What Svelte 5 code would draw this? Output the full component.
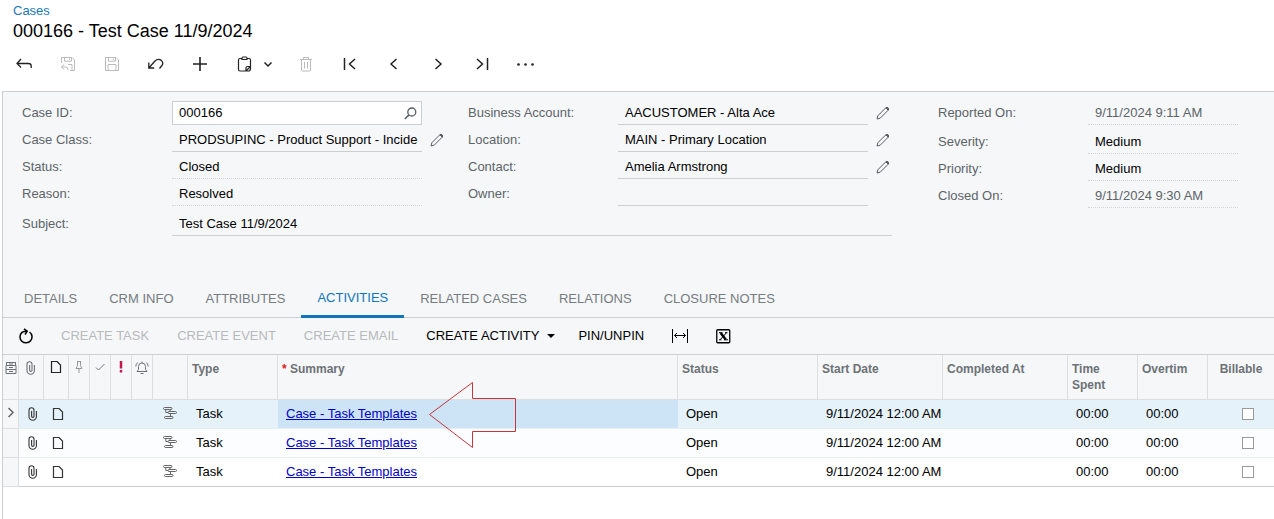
<script lang="ts">
  interface Field {
    id:string,
    label:string,
    value:string,
    edit?:boolean,
    locked?:boolean,
    muted?:boolean,
    search?:boolean};

  let caseFields = $state<Field[]>([
    { id: 'caseId', label: 'Case ID:', value: '000166', search: true },
    { id: 'caseClass', label: 'Case Class:', value: 'PRODSUPINC - Product Support - Incident', edit: true },
    { id: 'status', label: 'Status:', value: 'Closed', locked: true },
    { id: 'reason', label: 'Reason:', value: 'Resolved', locked: true },
  ]);
  let accountFields = $state<Field[]>([
    { id: 'account', label: 'Business Account:', value: 'AACUSTOMER - Alta Ace', edit: true },
    { id: 'location', label: 'Location:', value: 'MAIN - Primary Location', edit: true },
    { id: 'contact', label: 'Contact:', value: 'Amelia Armstrong', edit: true },
    { id: 'owner', label: 'Owner:', value: '' },
  ]);
  let dateFields = $state<Field[]>([
    { id: 'reportedOn', label: 'Reported On:', value: '9/11/2024 9:11 AM', locked: true, muted: true },
    { id: 'severity', label: 'Severity:', value: 'Medium', locked: true },
    { id: 'priority', label: 'Priority:', value: 'Medium', locked: true },
    { id: 'closedOn', label: 'Closed On:', value: '9/11/2024 9:30 AM', locked: true, muted: true },
  ]);
  let subject = $state('Test Case 11/9/2024');

  const tabs = ['DETAILS', 'CRM INFO', 'ATTRIBUTES', 'ACTIVITIES', 'RELATED CASES', 'RELATIONS', 'CLOSURE NOTES'];
  let activeTab = $state('ACTIVITIES');

  let rows = $state([
    { type: 'Task', summary: 'Case - Task Templates', status: 'Open', start: '9/11/2024 12:00 AM', spent: '00:00', overtime: '00:00', billable: false },
    { type: 'Task', summary: 'Case - Task Templates', status: 'Open', start: '9/11/2024 12:00 AM', spent: '00:00', overtime: '00:00', billable: false },
    { type: 'Task', summary: 'Case - Task Templates', status: 'Open', start: '9/11/2024 12:00 AM', spent: '00:00', overtime: '00:00', billable: false },
  ]);
  let selected = $state(0);
</script>

{#snippet pencil()}
  <svg width="14" height="14" viewBox="0 0 14 14">
    <path d="M1 13l.8-3.200 8-8q1.200-1 2.200 0t.2 2.400l-8 8z" />
    <path d="M9.800 1.800q1.200-1 2.200 0t.2 2.400z" fill="currentColor" />
  </svg>
{/snippet}

{#snippet clip()}
  <svg width="10" height="14" viewBox="0 0 10 14">
    <path d="M1 5v4.500a3.700 3.700 0 0 0 7.400 0V4M1 5V3.200a2.500 2.500 0 0 1 5 0v6a1.200 1.200 0 0 1-2.400 0V4" stroke-width="1.100" />
  </svg>
{/snippet}

{#snippet note()}
  <svg width="12" height="12" viewBox="0 0 12 12">
    <path d="M1.500.5h5.500l3.500 3.500v7.500h-9z" stroke-width="1.200" />
  </svg>
{/snippet}

{#snippet taskIcon()}
  <svg width="14" height="14" viewBox="0 0 14 14">
    <rect x=".5" y="1.500" width="8.500" height="2" rx="1" />
    <rect x="5" y="5.500" width="8.500" height="2" rx="1" />
    <rect x="1.500" y="10.500" width="8.500" height="2" rx="1" />
    <path d="M7 3.500v2M2.800 3.500v3H5M7.500 7.500v3" />
  </svg>
{/snippet}

{#snippet fieldRow(f:Field)}
  <div class="field">
    <label for={f.id}>{f.label}</label>
    <div class="box" class:locked={f.locked} class:search={f.search}>
      <input id={f.id} type="text" bind:value={f.value} readonly={f.locked} class:muted={f.muted} />
      {#if f.search}
        <button type="button" class="plain" aria-label="Search">
          <svg width="13" height="13" viewBox="0 0 13 13"><circle cx="7.800" cy="5" r="4" stroke-width="1.300" /><path d="M4.900 7.900L.8 12" stroke-width="1.500" /></svg>
        </button>
      {/if}
    </div>
    {#if f.edit}
      <button type="button" class="plain edit" aria-label="Edit">{@render pencil()}</button>
    {/if}
  </div>
{/snippet}

<div class="page">
  <header>
    <a class="crumb" href="#cases">Cases</a>
    <h1>000166 - Test Case 11/9/2024</h1>
    <div class="actions">
      <button aria-label="Back">
        <svg width="16" height="16" viewBox="0 0 16 16"><path d="M5 3L1 7.500l4 4M1 7.500h11.500q2.700 0 2.700 2.500V12" stroke-width="1.300" /></svg>
      </button>
      <button aria-label="Save and close" disabled>
        <svg width="16" height="16" viewBox="0 0 16 16">
          <path d="M1.500 7V1.500H12L14.500 4v10.500H10M4.500 1.500v3.700h7V1.500M9.500 2.500v1.700M8 8.500h4v6M4.300 8.300L1.500 11l2.800 2.700M1.500 11H6q2 0 2 3" />
        </svg>
      </button>
      <button aria-label="Save" disabled>
        <svg width="16" height="16" viewBox="0 0 16 16">
          <path d="M1.500 1.500H12L14.500 4v10.500h-13zM4.500 1.500v3.700h7V1.500M9.500 2.500v1.700M4 14.500v-6h8v6" />
        </svg>
      </button>
      <button aria-label="Undo">
        <svg width="18" height="16" viewBox="0 0 18 16"><path d="M1.800 6.500v5.500h5.400M1.800 12L8 5q3-3 6.300-.6 2.800 3 .2 5.600l-2 2.500" stroke-width="1.300" /></svg>
      </button>
      <button aria-label="Add">
        <svg width="16" height="16" viewBox="0 0 16 16"><path d="M8 1v14M1 8h14" stroke-width="1.600" /></svg>
      </button>
      <button class="wide" aria-label="Clipboard">
        <svg width="16" height="16" viewBox="0 0 16 16">
          <path d="M5 2.500H3q-1.500 0-1.500 1.500v9.500q0 1.500 1.500 1.500h6l4.500-4.500V4q0-1.500-1.500-1.500h-2M5 3.500v-1q0-1.500 1-1.500h3q1 0 1 1.500v1zM9 15v-3q0-1.500 1.500-1.500h3v2q0 2.500-2 2.500z" stroke-width="1.200" />
        </svg>
        <svg width="10" height="16" viewBox="0 0 10 16"><path d="M1.500 6.500L5 10l3.500-3.500" stroke-width="1.500" /></svg>
      </button>
      <button aria-label="Delete" disabled>
        <svg width="16" height="16" viewBox="0 0 16 16">
          <path d="M2 3.500h12M5.500 3.500v-2h5v2M3.500 3.500v10.500q0 1 1 1h7q1 0 1-1V3.500M6.500 6v6.500M9.500 6v6.500" />
        </svg>
      </button>
      <button aria-label="First">
        <svg width="16" height="16" viewBox="0 0 16 16"><path d="M2.500 2v12M13 3L7.500 8l5.500 5" stroke-width="1.500" /></svg>
      </button>
      <button aria-label="Previous">
        <svg width="16" height="16" viewBox="0 0 16 16"><path d="M10.500 3L5 8l5.500 5" stroke-width="1.500" /></svg>
      </button>
      <button aria-label="Next">
        <svg width="16" height="16" viewBox="0 0 16 16"><path d="M5.500 3L11 8l-5.500 5" stroke-width="1.500" /></svg>
      </button>
      <button aria-label="Last">
        <svg width="16" height="16" viewBox="0 0 16 16"><path d="M13.500 2v12M3 3l5.500 5L3 13" stroke-width="1.500" /></svg>
      </button>
      <button aria-label="More">
        <svg width="18" height="16" viewBox="0 0 18 16" class="dots">
          <circle cx="1.500" cy="8.500" r="1.300" /><circle cx="8.500" cy="8.500" r="1.300" /><circle cx="15.500" cy="8.500" r="1.300" />
        </svg>
      </button>
    </div>
  </header>

  <main>
    <form>
      <div class="columns">
        <div class="stack">
          {#each caseFields as f (f.id)}{@render fieldRow(f)}{/each}
        </div>
        <div class="stack">
          {#each accountFields as f (f.id)}{@render fieldRow(f)}{/each}
        </div>
        <div class="stack dates">
          {#each dateFields as f (f.id)}{@render fieldRow(f)}{/each}
        </div>
      </div>
      <div class="field subject">
        <label for="subject">Subject:</label>
        <div class="box"><input id="subject" type="text" bind:value={subject} /></div>
      </div>
    </form>

    <div class="tabs" role="tablist">
      {#each tabs as tab}
        <button role="tab" aria-selected={activeTab === tab} class:active={activeTab === tab} onclick={() => { activeTab = tab }}>{tab}</button>
      {/each}
    </div>

    <div class="tools">
      <button class="refresh" aria-label="Refresh">
        <svg width="14" height="16" viewBox="0 0 14 16">
          <path d="M10.500 4a6 6 0 1 1-7.500.4Q5 3 8 3.200" stroke-width="1.500" /><path d="M5 .8l3.200 2.400L6 6.500" stroke-width="1.500" />
        </svg>
      </button>
      <button disabled>CREATE TASK</button>
      <button disabled>CREATE EVENT</button>
      <button disabled>CREATE EMAIL</button>
      <button class="drop">CREATE ACTIVITY <span class="caret"></span></button>
      <button>PIN/UNPIN</button>
      <button aria-label="Fit columns">
        <svg width="16" height="16" viewBox="0 0 16 16"><path d="M.5 1v14M15.500 1v14M2.500 7.500h11M5 5L2.500 7.500 5 10M11 5l2.500 2.500L11 10" /></svg>
      </button>
      <button aria-label="Export to Excel">
        <svg width="15" height="16" viewBox="0 0 15 16">
          <rect x=".75" y="1.750" width="13" height="13" rx="1" stroke-width="1.300" />
          <path d="M4.700 5l5 6.500" stroke-width="2.500" /><path d="M10.300 5l-6 6.500M3 4.700h3.500M9 4.700h2.500M3 11.800h2.500M8 11.800h4" />
        </svg>
      </button>
    </div>

    <table>
      <colgroup>
        <col class="w16" /><col class="w25" /><col class="w25" />
        <col class="w21" /><col class="w21" /><col class="w21" /><col class="w21" />
        <col class="w35" /><col class="w90" /><col class="w400" /><col class="w140" />
        <col class="w125" /><col class="w125" /><col class="w70" /><col class="w70" /><col />
      </colgroup>
      <thead>
        <tr>
          <th class="ic">
            <svg width="12" height="14" viewBox="0 0 12 14">
              <path d="M2 1.500h8M1 4.500h10v8H1zM1 8.500h10M1.500 1v3M10.500 1v3M4 3h4M4 6.500h4M4 10.500h4" />
            </svg>
          </th>
          <th class="ic">{@render clip()}</th>
          <th class="ic dark">{@render note()}</th>
          <th class="ic light">
            <svg width="8" height="12" viewBox="0 0 8 12"><path d="M2 .5h4M2.500.5v4L1 7.500h6L5.500 4.500v-4M4 7.500V12" /></svg>
          </th>
          <th class="ic">
            <svg width="10" height="12" viewBox="0 0 10 12"><path d="M1 6.500L3.500 9 9.500 3" /></svg>
          </th>
          <th class="ic alert">
            <svg width="4" height="12" viewBox="0 0 4 12"><path d="M2 0v7.500M2 9v2.500" stroke-width="2.500" /></svg>
          </th>
          <th class="ic">
            <svg width="14" height="14" viewBox="0 0 14 14">
              <path d="M2 10.500h10l-1.500-2V5.500a3.500 3.500 0 0 0-7 0v3zM7 2V.5M5.500 12.500h3M.8 5.500q0-2.500 2-4M13.200 5.500q0-2.500-2-4" />
            </svg>
          </th>
          <th></th>
          <th>Type</th>
          <th><span class="star">*</span> Summary</th>
          <th>Status</th>
          <th>Start Date</th>
          <th>Completed At</th>
          <th>Time Spent</th>
          <th>Overtim</th>
          <th class="mid">Billable</th>
        </tr>
      </thead>
      <tbody>
        {#each rows as row, i}
          <tr class:selected={i === selected} onclick={() => { selected = i }}>
            <td class="marker">
              {#if i === selected}
                <svg width="8" height="16" viewBox="0 0 8 16"><path d="M1.500 2L6 6.500 1.500 11" stroke-width="1.500" /></svg>
              {/if}
            </td>
            <td class="ic">{@render clip()}</td>
            <td class="ic">{@render note()}</td>
            <td></td>
            <td></td>
            <td></td>
            <td></td>
            <td class="ic task">{@render taskIcon()}</td>
            <td>{row.type}</td>
            <td class="summary">
              <a href="#task">{row.summary}</a>
              {#if i === 0}
                <svg class="arrow" width="90" height="68" viewBox="0 0 90 68">
                  <path d="M1.500 34.500l43-32v16h43v33h-43v16z" />
                </svg>
              {/if}
            </td>
            <td>{row.status}</td>
            <td>{row.start}</td>
            <td></td>
            <td>{row.spent}</td>
            <td>{row.overtime}</td>
            <td class="check"><input type="checkbox" aria-label="Billable" bind:checked={row.billable} /></td>
          </tr>
        {/each}
      </tbody>
    </table>
  </main>
</div>

<style>
  :global(body){
    background: #fff;
  }
  .page{
    min-height: 100vh;
    display: flex;
    flex-direction: column;
    font-family: "Liberation Sans", Arial, sans-serif;
    font-size: 13px;
    line-height: 16px;
    color: #000;
  }
  button, input{
    font: inherit;
    color: inherit;
  }
  button{
    background: none;
    border: 0;
    padding: 0;
    cursor: pointer;
  }
  svg{
    display: block;
    flex: none;
    fill: none;
    stroke: currentColor;
  }
  header{
    padding: 3px 2px 11px;
  }
  .crumb{
    display: block;
    margin-left: 11px;
    color: #1a78bd;
    text-decoration: none;
  }
  h1{
    margin: 0 0 0 11px;
    font-size: 18px;
    font-weight: 400;
    line-height: 24px;
  }
  .actions{
    display: flex;
    margin-top: 5px;
  }
  .actions button{
    width: 44px;
    height: 32px;
    display: flex;
    align-items: center;
    justify-content: center;
    color: #222;
  }
  .actions button:disabled{
    color: #bbb;
  }
  .actions .wide{
    width: 62px;
    gap: 10px;
    padding-left: 4px;
  }
  .dots{
    fill: currentColor;
    stroke: none;
  }
  main{
    flex: 1;
    margin-left: 2px;
    border-top: 1px solid #ccced0;
    border-left: 1px solid #ccced0;
  }

  form{
    padding: 9px 19px 44px;
    background: #f5f7f9;
  }
  .columns{
    display: grid;
    grid-template-columns: 446px 470px 1fr;
    align-items: start;
  }
  .stack{
    display: flex;
    flex-direction: column;
    gap: 3px;
  }
  .field{
    display: flex;
    align-items: center;
    height: 24px;
  }
  .field label{
    width: 150px;
    flex: none;
    padding-bottom: 1px;
    color: #5d6468;
  }
  .box{
    width: 250px;
    height: 24px;
    box-sizing: border-box;
    display: flex;
    align-items: center;
    padding: 1px 4px 0 7px;
    border-bottom: 1px solid #ccced0;
  }
  .box input{
    flex: 1;
    min-width: 0;
    padding: 0;
    border: 0;
    outline: 0;
    background: none;
  }
  .box .muted{
    color: #5d6468;
  }
  .box.locked{
    border-bottom: 1px dotted #d3d5d7;
  }
  .box.search{
    padding: 0 4px 0 6px;
    background: #fff;
    border: 1px solid #ccced0;
  }
  .plain{
    color: #5a5f63;
  }
  .edit{
    margin-left: 8px;
  }
  .dates .box{
    width: 150px;
  }
  .dates .field:first-child{
    margin-bottom: 2px;
  }
  .subject{
    margin-top: 4px;
  }
  .subject .box{
    width: 720px;
  }

  .tabs{
    display: flex;
    height: 37px;
    padding-left: 5px;
    background: #f5f7f9;
    border-bottom: 1px solid #ccced0;
  }
  .tabs button{
    height: 38px;
    box-sizing: border-box;
    padding: 0 16px;
    color: #777c80;
  }
  .tabs .active{
    color: #0f76bc;
    border-bottom: 3px solid #0f76bc;
  }

  .tools{
    display: flex;
    align-items: center;
    gap: 28px;
    height: 36px;
    padding: 0 16px;
    background: #f5f7f9;
    border-bottom: 1px solid #ccced0;
  }
  .tools button:disabled{
    color: #b8babc;
  }
  .drop{
    display: flex;
    align-items: center;
    gap: 8px;
  }
  .tools .drop{
    margin-right: -5px;
  }
  .caret{
    border: 4px solid transparent;
    border-top-color: #000;
    border-bottom: 0;
  }

  table{
    width: 100%;
    table-layout: fixed;
    border-collapse: separate;
    border-spacing: 0;
  }
  .w16{ width: 16px; }
  .w21{ width: 21px; }
  .w25{ width: 25px; }
  .w35{ width: 35px; }
  .w70{ width: 70px; }
  .w90{ width: 90px; }
  .w125{ width: 125px; }
  .w140{ width: 140px; }
  .w400{ width: 400px; }
  th{
    height: 45px;
    box-sizing: border-box;
    padding: 6px 4px 0;
    vertical-align: top;
    text-align: left;
    font-size: 12px;
    color: #6d7276;
    background: #f5f7f9;
    border-right: 1px solid #dcdee0;
    border-bottom: 1px solid #dcdee0;
  }
  th:last-child{
    border-right: 0;
  }
  th.ic{
    padding: 6px 0 0;
  }
  .ic svg{
    margin: 0 auto;
  }
  th.mid{
    padding: 6px 0 0;
    text-align: center;
  }
  th.dark{
    color: #222;
  }
  th.light{
    color: #999;
  }
  th.alert{
    color: #c2184b;
  }
  .star{
    color: #e02020;
  }
  td{
    height: 29px;
    box-sizing: border-box;
    padding: 0 0 0 8px;
    white-space: nowrap;
    border-bottom: 1px solid #e5eff6;
  }
  tr:nth-child(even) td{
    background: #fbfdfe;
  }
  tr.selected td{
    background: #e5f2fa;
  }
  tr.selected .summary{
    background: #cce4f5;
  }
  tr:last-child td{
    border-bottom-color: #ccced0;
  }
  tr td.marker{
    padding: 0 0 0 4px;
    color: #666;
    background: #f5f7f9;
    border-right: 1px solid #dcdee0;
    border-bottom-color: #dcdee0;
  }
  td.ic{
    padding: 0 0 0 2px;
    color: #333;
  }
  td.task{
    padding: 0 2px 2px 0;
    color: #666;
  }
  td a{
    color: #0000c8;
  }
  .summary{
    position: relative;
  }
  .arrow{
    position: absolute;
    left: 150px;
    top: -20px;
    z-index: 1;
    color: #c8343c;
    pointer-events: none;
  }
  td.check{
    padding: 0 0 2px 13px;
    text-align: center;
  }
  .check input{
    appearance: none;
    width: 12px;
    height: 12px;
    margin: 0;
    vertical-align: middle;
    background: #fff;
    border: 1px solid #999;
  }
  .check input:checked{
    background: #0f76bc;
  }
</style>
